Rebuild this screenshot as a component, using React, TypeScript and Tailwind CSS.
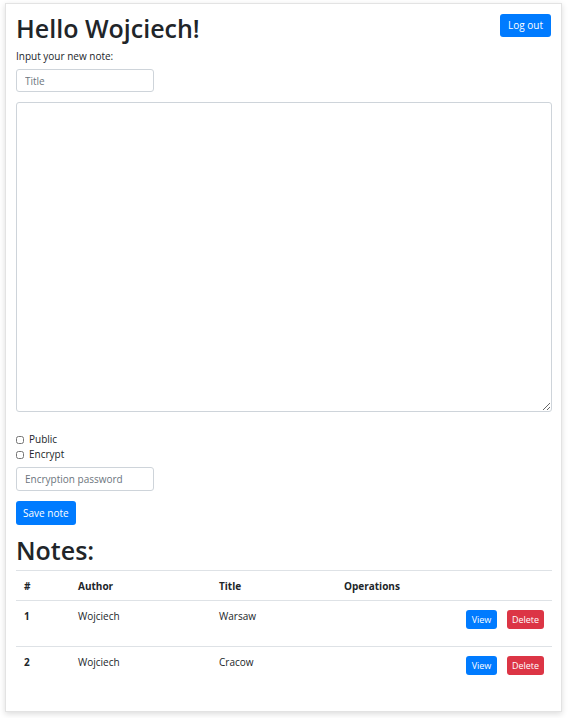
import * as React from "react";

const notes = [
  { id: 1, author: "Wojciech", title: "Warsaw" },
  { id: 2, author: "Wojciech", title: "Cracow" },
];

const App: React.FC = () => {
  return (
    <div
      className="min-h-screen bg-white pt-[3px] pl-[5px] text-[#212529]"
      style={{ fontFamily: "'Open Sans', 'Noto Sans', sans-serif" }}
    >
      <div className="w-[557px] h-[709px] bg-white border border-[#e3e3e3] shadow-[0_2px_6px_rgba(0,0,0,0.14)] px-[10px] pt-[10px]">
        <div className="flex justify-between items-start">
          <h1 className="text-[25px] leading-[31px] font-semibold -mt-[1px]">Hello Wojciech!</h1>
          <button className="h-[23px] px-[8px] rounded-[3px] bg-[#007bff] text-white text-[10px]">
            Log out
          </button>
        </div>
        <p className="text-[10px] leading-[15px] mt-[5px]">Input your new note:</p>
        <input
          className="block mt-[5px] w-[138px] h-[23px] px-[8px] border border-[#ced4da] rounded-[3px] text-[10px] placeholder:text-[#6c757d] outline-none"
          placeholder="Title"
        />
        <textarea className="block mt-[10px] w-[536px] h-[310px] border border-[#ced4da] rounded-[3px] outline-none" />
        <div className="mt-[20px] flex flex-col text-[10px] leading-[15px]">
          <label className="flex items-center gap-[5px]">
            <input type="checkbox" className="w-[8px] h-[8px] m-0" />
            Public
          </label>
          <label className="flex items-center gap-[5px]">
            <input type="checkbox" className="w-[8px] h-[8px] m-0" />
            Encrypt
          </label>
        </div>
        <input
          className="block mt-[5px] w-[138px] h-[24px] px-[8px] border border-[#ced4da] rounded-[3px] text-[10px] placeholder:text-[#6c757d] outline-none"
          placeholder="Encryption password"
        />
        <button className="block mt-[10px] h-[24px] px-[7px] rounded-[3px] bg-[#007bff] text-white text-[10px]">
          Save note
        </button>
        <h2 className="text-[25px] leading-[31px] font-semibold mt-[10px]">Notes:</h2>
        <table className="mt-[4px] w-[536px] text-[10px] border-collapse">
          <thead>
            <tr className="h-[30px] border-t border-b border-[#dee2e6] text-left">
              <th className="w-[54px] px-[8px] pt-[2px] font-bold">#</th>
              <th className="w-[141px] px-[8px] pt-[2px] font-bold">Author</th>
              <th className="w-[125px] px-[8px] pt-[2px] font-bold">Title</th>
              <th className="px-[8px] pt-[2px] font-bold">Operations</th>
            </tr>
          </thead>
          <tbody>
            {notes.map((n, i) => (
              <tr
                key={n.id}
                className={"h-[46px] align-top " + (i === 0 ? "border-b border-[#dee2e6]" : "")}
              >
                <td className="px-[8px] pt-[8px] font-bold">{n.id}</td>
                <td className="px-[8px] pt-[8px]">{n.author}</td>
                <td className="px-[8px] pt-[8px]">{n.title}</td>
                <td className="px-[8px] pt-[9px]">
                  <div className="flex justify-end gap-[10px]">
                    <button className="h-[19px] w-[31px] rounded-[3px] bg-[#007bff] text-white text-[9px]">
                      View
                    </button>
                    <button className="h-[19px] w-[37px] rounded-[3px] bg-[#dc3545] text-white text-[9px]">
                      Delete
                    </button>
                  </div>
                </td>
              </tr>
            ))}
          </tbody>
        </table>
      </div>
    </div>
  );
};

export default App;
